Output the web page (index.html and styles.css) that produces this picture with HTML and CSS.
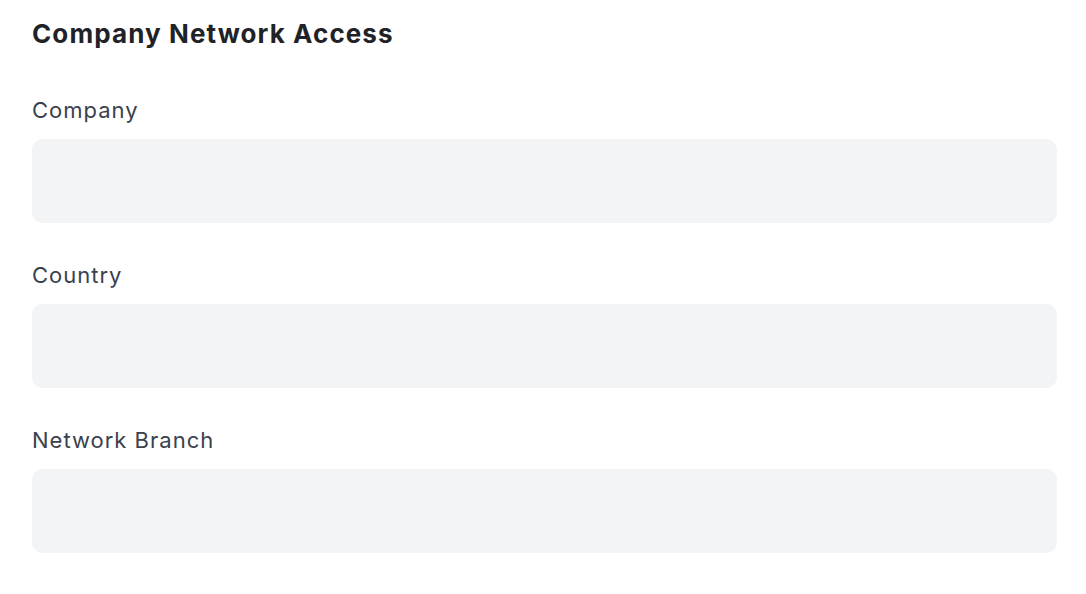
FILE: index.html
```html
<!DOCTYPE html>
<html lang="en">
<head>
  <meta charset="UTF-8" />
  <meta name="viewport" content="width=device-width, initial-scale=1.0" />
  <title>Company Network Access</title>
  <link rel="stylesheet" href="styles.css">
</head>
<body>
  <main class="access-form">
    <h1>Company Network Access</h1>
    <div class="field">
      <label for="company">Company</label>
      <input type="text" id="company">
    </div>
    <div class="field">
      <label for="country">Country</label>
      <input type="text" id="country">
    </div>
    <div class="field">
      <label for="branch">Network Branch</label>
      <input type="text" id="branch">
    </div>
  </main>
</body>
</html>
```

FILE: styles.css
```css
body {
  font-family: 'Inter', sans-serif;
  background-color: #fff;
  color: #374151;
  margin: 0;
  padding: 0;
}
.access-form {
  padding: 18px 29px 0 32px;
}
h1 {
  font-size: 26px;
  line-height: 32px;
  font-weight: 700;
  letter-spacing: 1.1px;
  color: #1f2328;
  margin: 0 0 44px;
}
.field {
  display: flex;
  flex-direction: column;
  gap: 13px;
  margin-bottom: 36px;
}
.field label {
  font-size: 22px;
  line-height: 32px;
  letter-spacing: 1px;
  color: #3a414c;
}
.field input {
  height: 84px;
  box-sizing: border-box;
  border: none;
  border-radius: 11px;
  background-color: #f3f4f6;
  padding: 0 20px;
  font: inherit;
  font-size: 20px;
  outline: none;
}
```
